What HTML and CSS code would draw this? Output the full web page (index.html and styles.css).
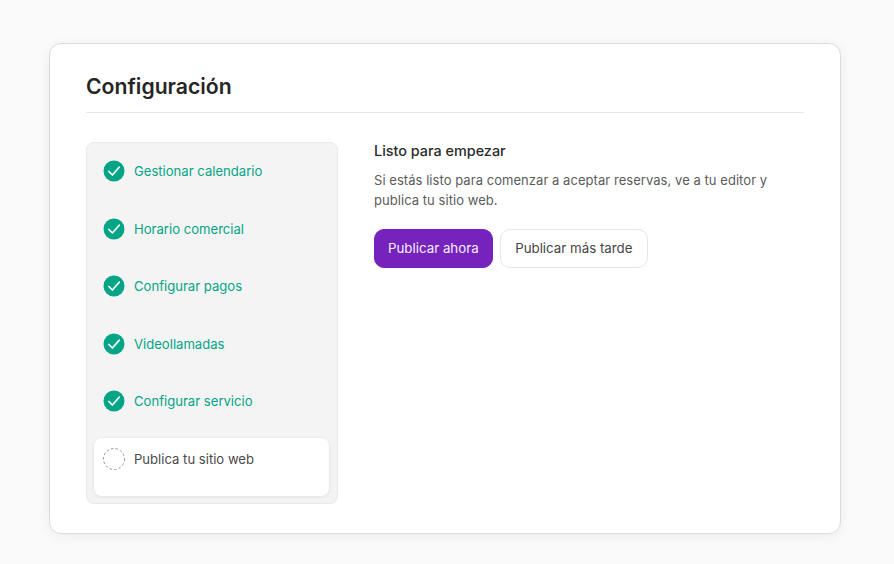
FILE: index.html
```html
<!DOCTYPE html>
<html lang="es">
<head>
<meta charset="utf-8">
<title>Configuración</title>
<link rel="stylesheet" href="styles.css">
</head>
<body>
<main class="card">
  <h1 class="title">Configuración</h1>
  <div class="content">
    <ul class="steps">
      <li class="step done"><svg class="icon" viewBox="0 0 22 22"><circle cx="11" cy="11" r="10.5" fill="#04a586"/><path d="M5.9 11.5l3.5 3.5 6.8-7.8" fill="none" stroke="#fff" stroke-width="1.7" stroke-linecap="round" stroke-linejoin="round"/></svg><span>Gestionar calendario</span></li>
      <li class="step done"><svg class="icon" viewBox="0 0 22 22"><circle cx="11" cy="11" r="10.5" fill="#04a586"/><path d="M5.9 11.5l3.5 3.5 6.8-7.8" fill="none" stroke="#fff" stroke-width="1.7" stroke-linecap="round" stroke-linejoin="round"/></svg><span>Horario comercial</span></li>
      <li class="step done"><svg class="icon" viewBox="0 0 22 22"><circle cx="11" cy="11" r="10.5" fill="#04a586"/><path d="M5.9 11.5l3.5 3.5 6.8-7.8" fill="none" stroke="#fff" stroke-width="1.7" stroke-linecap="round" stroke-linejoin="round"/></svg><span>Configurar pagos</span></li>
      <li class="step done"><svg class="icon" viewBox="0 0 22 22"><circle cx="11" cy="11" r="10.5" fill="#04a586"/><path d="M5.9 11.5l3.5 3.5 6.8-7.8" fill="none" stroke="#fff" stroke-width="1.7" stroke-linecap="round" stroke-linejoin="round"/></svg><span>Videollamadas</span></li>
      <li class="step done"><svg class="icon" viewBox="0 0 22 22"><circle cx="11" cy="11" r="10.5" fill="#04a586"/><path d="M5.9 11.5l3.5 3.5 6.8-7.8" fill="none" stroke="#fff" stroke-width="1.7" stroke-linecap="round" stroke-linejoin="round"/></svg><span>Configurar servicio</span></li>
      <li class="step active"><svg class="icon" viewBox="0 0 22 22"><circle cx="11" cy="11" r="10.5" fill="none" stroke="#8f8f8f" stroke-width="0.9" stroke-dasharray="2.6 2"/></svg><span>Publica tu sitio web</span></li>
    </ul>
    <section class="detail">
      <h2 class="detail-title">Listo para empezar</h2>
      <p class="detail-text">Si estás listo para comenzar a aceptar reservas, ve a tu editor y publica tu sitio web.</p>
      <div class="actions">
        <button class="btn primary">Publicar ahora</button>
        <button class="btn secondary">Publicar más tarde</button>
      </div>
    </section>
  </div>
</main>
</body>
</html>
```
FILE: styles.css
```css
* { box-sizing: border-box; }
html, body { margin: 0; height: 100%; }
body {
  background: #fafafa;
  font-family: Inter, "Noto Sans", sans-serif;
  color: #2a2a2a;
  padding: 43px 54px 31px 49px;
}
.card {
  width: 792px;
  height: 491px;
  background: #fff;
  border: 1px solid #dcdcdc;
  border-radius: 12px;
  box-shadow: 0 2px 12px rgba(0, 0, 0, 0.06);
  padding: 25px 36px 29px;
  display: flex;
  flex-direction: column;
}
.title {
  margin: 0;
  height: 45px;
  border-bottom: 1px solid #e8e8e8;
  font-size: 21.2px;
  line-height: 34px;
  font-weight: 600;
  color: #262626;
}
.content {
  display: flex;
  gap: 36px;
  margin-top: 29px;
  flex: 1;
}
.steps {
  list-style: none;
  margin: 0;
  padding: 0 8px 7px 7px;
  width: 252px;
  height: 362px;
  background: #f4f4f4;
  border: 1px solid #e9e9e9;
  border-radius: 8px;
}
.step {
  height: 57.5px;
  display: flex;
  align-items: flex-start;
  gap: 9px;
  padding: 17px 9px 0;
  font-size: 13.1px;
  line-height: 22px;
}
.step.done { color: #04a586; }
.step.active {
  height: 58px;
  margin-top: 7px;
  padding-top: 10px;
  background: #fff;
  border-radius: 8px;
  color: #4a4a4a;
  box-shadow: 0 1px 4px rgba(0, 0, 0, 0.08);
}
.icon {
  width: 22px;
  height: 22px;
  flex: none;
}
.detail { flex: 1; }
.detail-title {
  margin: 0;
  font-size: 14.4px;
  line-height: 18px;
  font-weight: 500;
  color: #2b2b2b;
}
.detail-text {
  margin: 10px 0 0;
  font-size: 13px;
  letter-spacing: 0.05px;
  line-height: 20px;
  color: #5c5c5c;
}
.actions {
  display: flex;
  gap: 7px;
  margin-top: 19px;
}
.btn {
  height: 39px;
  border-radius: 10px;
  font-family: inherit;
  font-size: 13.3px;
}
.primary {
  padding: 0 13px 2px;
  background: #7623bd;
  border: 1px solid #7623bd;
  color: #f6effc;
}
.secondary {
  padding: 0 14.5px 2px;
  background: #fff;
  border: 1px solid #e6e6e6;
  color: #454545;
}
```
